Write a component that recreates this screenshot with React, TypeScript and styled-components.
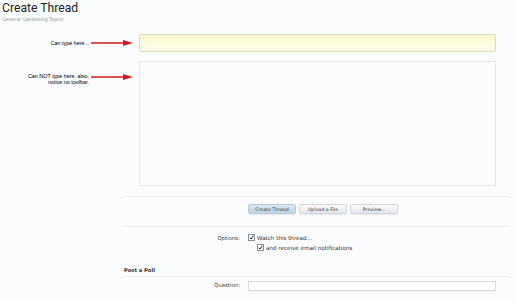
import React from "react";
import styled, { createGlobalStyle } from "styled-components";

const GlobalStyle = createGlobalStyle`
  html, body {
    margin: 0;
    padding: 0;
    background: #fbfcfd;
  }
  body {
    font-family: "DejaVu Sans", Verdana, sans-serif;
    color: #333;
  }
`;

const Arrow = () => (
  <svg width="42" height="6" viewBox="0 0 42 6">
    <line x1="0" y1="3" x2="34" y2="3" stroke="#d01818" strokeWidth="1.6" />
    <polygon points="32,0 42,3 32,6" fill="#d01818" />
  </svg>
);

const Check = () => (
  <svg width="5" height="5" viewBox="0 0 10 10">
    <path d="M1.5 5.5 L4 8 L8.5 1.5" stroke="#222" strokeWidth="2" fill="none" />
  </svg>
);

const App = (): React.ReactElement => {
  return (
    <>
      <GlobalStyle />
      <Page>
        <Header>
          <Title>Create Thread</Title>
          <Crumb>General Gardening Topics</Crumb>
        </Header>

        <Row $label={139} $top={0}>
          <Note>
            <NoteText>Can type here...</NoteText>
            <Arrow />
          </Note>
          <TitleInput />
        </Row>

        <Row $label={139} $top={9}>
          <Note $alignTop={12}>
            <NoteText>
              Can NOT type here, also,
              <br />
              notice no toolbar.
            </NoteText>
            <Arrow />
          </Note>
          <Editor />
        </Row>

        <Divider $top={10} />

        <Row $label={248} $top={7}>
          <span />
          <Buttons>
            <Button $primary>Create Thread</Button>
            <Button>Upload a File</Button>
            <Button>Preview...</Button>
          </Buttons>
        </Row>

        <Divider $top={12} />

        <Row $label={248} $top={7}>
          <Label>Options:</Label>
          <Checks>
            <CheckLine>
              <Box><Check /></Box>
              Watch this thread...
            </CheckLine>
            <CheckLine $indent>
              <Box><Check /></Box>
              and receive email notifications
            </CheckLine>
          </Checks>
        </Row>

        <SectionTitle>Post a Poll</SectionTitle>

        <Row $label={248} $top={4}>
          <Label>Question:</Label>
          <QuestionInput />
        </Row>
      </Page>
    </>
  );
};

const Page = styled.div`
  width: 515px;
  height: 300px;
  overflow: hidden;
  display: flex;
  flex-direction: column;
`;

const Header = styled.div`
  padding: 0 0 0 2px;
  height: 34px;
  box-sizing: border-box;
`;

const Title = styled.h1`
  margin: 0;
  font-family: Roboto, "Open Sans", sans-serif;
  font-weight: 400;
  font-size: 12.2px;
  line-height: 16px;
  color: #222;
`;

const Crumb = styled.div`
  font-size: 4.8px;
  color: #8a9097;
  margin-top: 1px;
`;

const Row = styled.div<{ $label: number; $top: number }>`
  display: grid;
  grid-template-columns: ${(p) => p.$label}px 1fr;
  margin-top: ${(p) => p.$top}px;
`;

const Note = styled.div<{ $alignTop?: number }>`
  display: flex;
  align-items: flex-start;
  justify-content: flex-end;
  gap: 2px;
  padding-right: 6px;
  padding-top: ${(p) => p.$alignTop ?? 6}px;
  svg {
    flex-shrink: 0;
    margin-top: ${(p) => (p.$alignTop ? 1 : 0)}px;
  }
`;

const NoteText = styled.div`
  font-family: "Liberation Sans", Arial, sans-serif;
  font-size: 5.4px;
  line-height: 6px;
  color: #111;
  text-align: right;
  text-shadow: 0 0 1px rgba(0, 0, 0, 0.15);
`;

const TitleInput = styled.div`
  width: 357px;
  height: 18px;
  box-sizing: border-box;
  border: 1px solid #d9dcb8;
  border-radius: 2px;
  background: linear-gradient(#fbfbd2, #fdfde9);
`;

const Editor = styled.div`
  width: 357px;
  height: 125px;
  box-sizing: border-box;
  border: 1px solid #e3e9ee;
  background: #fbfcfd;
`;

const Divider = styled.div<{ $top: number }>`
  margin: ${(p) => p.$top}px 7px 0 124px;
  height: 1px;
  background: #e8eef2;
`;

const Buttons = styled.div`
  display: flex;
  gap: 3px;
`;

const Button = styled.div<{ $primary?: boolean }>`
  width: 48px;
  height: 10px;
  box-sizing: border-box;
  display: flex;
  align-items: center;
  justify-content: center;
  font-size: 4.7px;
  color: #333;
  border-radius: 2px;
  border: 1px solid ${(p) => (p.$primary ? "#b7cad8" : "#d2d6da")};
  background: ${(p) =>
    p.$primary
      ? "linear-gradient(#dde9f2, #bcd3e3)"
      : "linear-gradient(#fbfbfc, #e3e6e9)"};
  box-shadow: 0 1px 1px rgba(0, 0, 0, 0.08);
`;

const Label = styled.div`
  font-size: 5.4px;
  color: #444;
  text-align: right;
  padding-right: 8px;
  padding-top: 1px;
`;

const Checks = styled.div`
  display: flex;
  flex-direction: column;
  gap: 3px;
`;

const CheckLine = styled.div<{ $indent?: boolean }>`
  display: flex;
  align-items: center;
  gap: 2px;
  font-size: 5.6px;
  color: #333;
  margin-left: ${(p) => (p.$indent ? 9 : 0)}px;
`;

const Box = styled.span`
  width: 7px;
  height: 7px;
  box-sizing: border-box;
  border: 1px solid #8a9098;
  background: #fff;
  display: flex;
  align-items: center;
  justify-content: center;
`;

const SectionTitle = styled.div`
  margin: 16px 7px 0 124px;
  padding-bottom: 3px;
  border-bottom: 1px solid #e8eef2;
  font-size: 5.2px;
  font-weight: bold;
  color: #333;
`;

const QuestionInput = styled.div`
  width: 248px;
  height: 10px;
  box-sizing: border-box;
  border: 1px solid #d5d9dd;
  border-radius: 1px;
  background: #fff;
`;

export default App;
